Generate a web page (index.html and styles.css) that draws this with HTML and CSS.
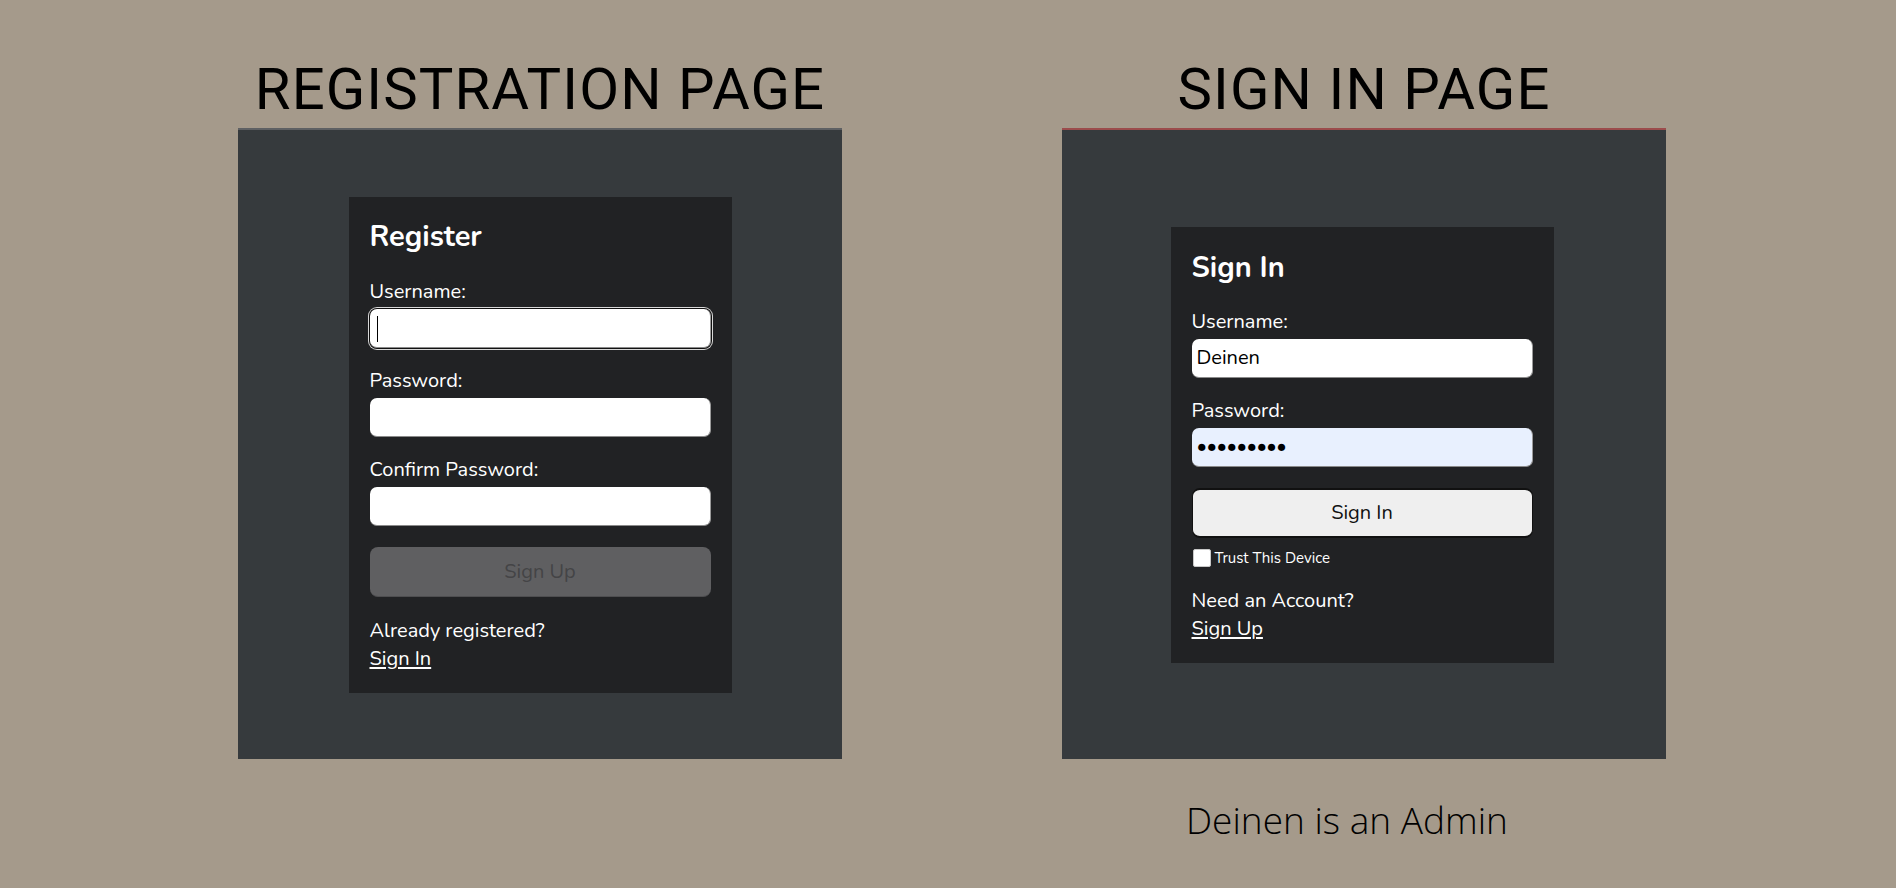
FILE: index.html
```html
<!DOCTYPE html>
<html lang="en">
<head>
<meta charset="utf-8">
<title>Registration and Sign In</title>
<link rel="stylesheet" href="styles.css">
</head>
<body>
<main class="page">
  <div class="column">
    <h2 class="page-title">REGISTRATION PAGE</h2>
    <div class="panel panel-register">
      <section class="card">
        <h1 class="card-title">Register</h1>
        <form class="form">
          <label class="label" for="r-user">Username:</label>
          <div class="field">
            <input class="input input-focus" id="r-user" type="text">
            <span class="caret"></span>
          </div>
          <label class="label label-gap" for="r-pass">Password:</label>
          <div class="field"><input class="input" id="r-pass" type="password"></div>
          <label class="label label-gap" for="r-conf">Confirm Password:</label>
          <div class="field"><input class="input" id="r-conf" type="password"></div>
          <button class="btn btn-disabled" type="button" disabled>Sign Up</button>
        </form>
        <p class="note">Already registered?<br><a class="link" href="#">Sign In</a></p>
      </section>
    </div>
  </div>

  <div class="column">
    <h2 class="page-title">SIGN IN PAGE</h2>
    <div class="panel panel-signin">
      <section class="card card-signin">
        <h1 class="card-title card-title-signin">Sign In</h1>
        <form class="form">
          <label class="label" for="s-user">Username:</label>
          <div class="field"><input class="input" id="s-user" type="text" value="Deinen"></div>
          <label class="label label-gap" for="s-pass">Password:</label>
          <div class="field"><input class="input input-autofill" id="s-pass" type="password" value="abcdefghi"></div>
          <button class="btn btn-primary" type="button">Sign In</button>
          <div class="check-row">
            <input class="checkbox" id="trust" type="checkbox">
            <label class="check-label" for="trust">Trust This Device</label>
          </div>
        </form>
        <p class="note note-signin">Need an Account?<br><a class="link" href="#">Sign Up</a></p>
      </section>
    </div>
    <p class="caption">Deinen is an Admin</p>
  </div>
</main>
</body>
</html>
```
FILE: styles.css
```css
* {
  box-sizing: border-box;
}

html, body {
  margin: 0;
  padding: 0;
}

body {
  background: #a59a8b;
  width: 1896px;
  height: 888px;
  overflow: hidden;
  font-family: "Nunito", "Lato", "Noto Sans", sans-serif;
}

.page {
  display: flex;
  gap: 220px;
  padding: 60px 0 0 238px;
}

.column {
  width: 604px;
  display: flex;
  flex-direction: column;
  align-items: stretch;
}

.page-title {
  margin: 0 0 10px;
  font-family: "Roboto", "Liberation Sans", sans-serif;
  font-weight: 400;
  font-size: 58px;
  line-height: 58px;
  letter-spacing: 1.1px;
  color: #000;
  text-align: center;
}

.panel {
  height: 631px;
  background: #363a3d;
  border-top: 2px solid #5e6063;
  display: flex;
  align-items: center;
  justify-content: center;
}

.panel-signin {
  border-top-color: #9b4c4c;
}

.card {
  width: 383px;
  background: #212224;
  padding: 22px 21px 20px;
  display: flex;
  flex-direction: column;
  color: #fff;
}

.card-signin {
  margin-right: 4px;
  padding-top: 23px;
}

.card-title {
  margin: 0 0 23px;
  font-weight: 700;
  font-size: 29px;
  line-height: 36px;
}

.card-title-signin {
  margin-bottom: 22px;
}

.form {
  display: flex;
  flex-direction: column;
}

.label {
  font-size: 20px;
  line-height: 28px;
}

.label-gap {
  margin-top: 19px;
}

.field {
  position: relative;
  margin-top: 3px;
}

.input {
  display: block;
  width: 100%;
  height: 39px;
  border: none;
  border-right: 1px solid #9a9a9a;
  border-bottom: 1px solid #8a8a8a;
  border-radius: 7px;
  background: #fff;
  padding: 0 5px;
  font-family: "Nunito", "Lato", "Noto Sans", sans-serif;
  font-size: 20px;
  color: #000;
  outline: none;
}

.input-focus {
  box-shadow: 0 0 0 1px #111, 0 0 0 2px #d8d8d8;
}

.input-autofill {
  background: #e8f0fe;
  letter-spacing: -0.5px;
}

.caret {
  position: absolute;
  left: 7px;
  top: 7px;
  width: 1px;
  height: 26px;
  background: #000;
}

.btn {
  display: block;
  width: 100%;
  height: 50px;
  margin-top: 21px;
  border-radius: 8px;
  font-family: "Nunito", "Lato", "Noto Sans", sans-serif;
  font-size: 20px;
}

.btn-disabled {
  background: #5f5f61;
  color: #444446;
  border: none;
  border-bottom: 1px solid #4e4e50;
}

.btn-primary {
  background: #efefef;
  color: #111;
  border: 1px solid #111;
  border-top-width: 2px;
  border-bottom-width: 2px;
}

.check-row {
  display: flex;
  align-items: center;
  height: 24px;
  margin-top: 8px;
  gap: 4px;
}

.checkbox {
  appearance: none;
  width: 18px;
  height: 18px;
  margin: 0 0 0 1px;
  background: #fff;
  border: 1px solid #c8c8c8;
  border-radius: 2px;
}

.check-label {
  font-size: 15px;
  line-height: 24px;
}

.note {
  margin: 20px 0 0;
  font-size: 20px;
  line-height: 28px;
}

.note-signin {
  margin-top: 17px;
}

.link {
  color: #fff;
  text-decoration: underline;
  text-underline-offset: 2px;
}

.caption {
  margin: 42px 0 0;
  padding-left: 124px;
  font-family: "Open Sans", "Noto Sans", sans-serif;
  font-weight: 300;
  font-size: 37px;
  line-height: 38px;
  color: #000;
}
```
